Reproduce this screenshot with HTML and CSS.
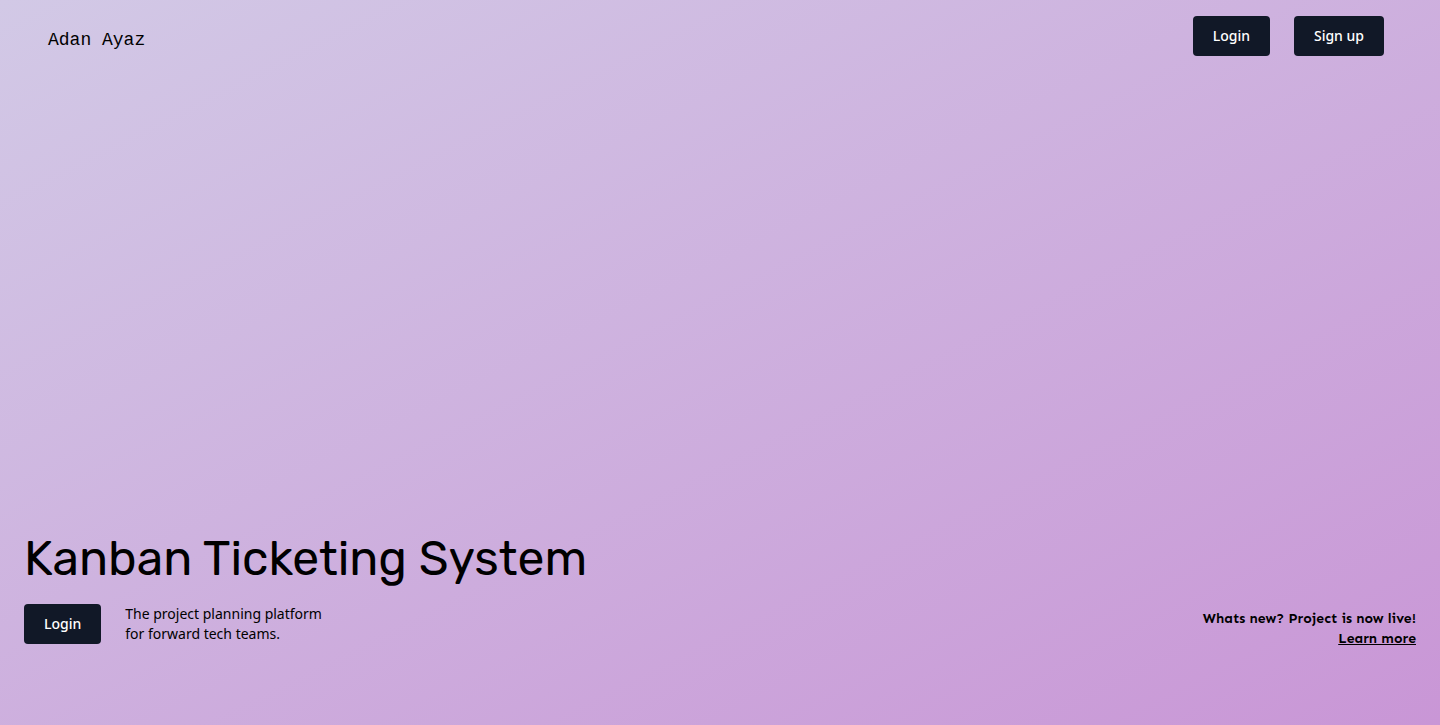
FILE: index.html
```html
<!DOCTYPE html>
<html lang="en">
<head>
<meta charset="utf-8">
<meta name="viewport" content="width=device-width, initial-scale=1">
<title>Kanban Ticketing System</title>
<link rel="stylesheet" href="styles.css">
</head>
<body>
<div class="page">
  <header class="topbar">
    <div class="brand">Adan Ayaz</div>
    <nav class="actions">
      <button type="button" class="btn">Login</button>
      <button type="button" class="btn">Sign up</button>
    </nav>
  </header>
  <main class="hero">
    <h1 class="title">Kanban Ticketing System</h1>
    <div class="row">
      <div class="intro">
        <button type="button" class="btn">Login</button>
        <p class="tagline">The project planning platform<br>for forward tech teams.</p>
      </div>
      <div class="news">
        <p class="news-text">Whats new? Project is now live!</p>
        <a class="news-link" href="#">Learn more</a>
      </div>
    </div>
  </main>
</div>
</body>
</html>
```
FILE: styles.css
```css
* {
  box-sizing: border-box;
}

body {
  margin: 0;
  font-family: "Noto Sans", sans-serif;
  font-size: 14px;
  line-height: 20px;
  color: #000;
}

h1,
p {
  margin: 0;
}

.page {
  display: flex;
  flex-direction: column;
  justify-content: space-between;
  min-height: 100vh;
  background: linear-gradient(to bottom right, #d2c9e6, #c996d6);
}

.topbar {
  display: flex;
  justify-content: space-between;
  padding: 16px 56px 16px 48px;
}

.brand {
  padding-top: 10px;
  font-family: "Liberation Mono", monospace;
  font-size: 18px;
  line-height: 28px;
}

.actions {
  display: flex;
  gap: 24px;
}

.btn {
  height: 40px;
  padding: 0 20px;
  border: 0;
  border-radius: 4px;
  background: #111827;
  color: #fff;
  font: 500 14px/20px "Noto Sans", sans-serif;
  cursor: pointer;
}

.hero {
  padding: 0 24px 76px;
}

.title {
  margin-bottom: 20px;
  font-family: Rubik, sans-serif;
  font-size: 48px;
  font-weight: 400;
  line-height: 50px;
}

.row {
  display: flex;
  justify-content: space-between;
  align-items: flex-end;
}

.intro {
  display: flex;
  gap: 24px;
  padding-bottom: 5px;
}

.news {
  font-family: Sen, Lato, sans-serif;
  font-weight: 700;
  text-align: right;
}

.news-link {
  color: inherit;
}
```
